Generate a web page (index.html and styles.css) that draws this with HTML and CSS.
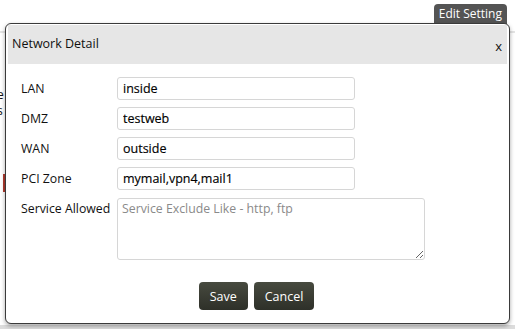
FILE: index.html
```html
<!DOCTYPE html>
<html lang="en">
<head>
  <meta charset="UTF-8" />
  <title>Network Detail</title>
  <link rel="stylesheet" href="styles.css">
</head>
<body>
  <div class="page">
    <div class="top-bar">
      <span class="edit-tab">Edit Setting</span>
    </div>
    <div class="behind">
      <span class="behind-text">e</span>
      <span class="behind-text">s</span>
      <span class="behind-mark"></span>
    </div>
  </div>

  <div class="modal">
    <div class="modal-header">
      <span class="modal-title">Network Detail</span>
      <span class="modal-close">x</span>
    </div>
    <div class="modal-body">
      <div class="form-row">
        <label class="form-label">LAN</label>
        <input class="form-input" type="text" value="inside">
      </div>
      <div class="form-row">
        <label class="form-label">DMZ</label>
        <input class="form-input" type="text" value="testweb">
      </div>
      <div class="form-row">
        <label class="form-label">WAN</label>
        <input class="form-input" type="text" value="outside">
      </div>
      <div class="form-row">
        <label class="form-label">PCI Zone</label>
        <input class="form-input" type="text" value="mymail,vpn4,mail1">
      </div>
      <div class="form-row">
        <label class="form-label">Service Allowed</label>
        <textarea class="form-textarea" placeholder="Service Exclude Like - http, ftp"></textarea>
      </div>
      <div class="form-actions">
        <button class="btn">Save</button>
        <button class="btn">Cancel</button>
      </div>
    </div>
  </div>
</body>
</html>
```

FILE: styles.css
```css
body, html {
  margin: 0;
  padding: 0;
  height: 100%;
  background-color: #fff;
  font-family: 'Open Sans', 'DejaVu Sans', sans-serif;
  font-size: 12px;
  color: #111;
  overflow: hidden;
}

.page {
  height: 100%;
  background: linear-gradient(#fff 0, #fff 325px, #dcdcdc 325px);
}

.top-bar {
  height: 33px;
  border-bottom: 2px solid #e4e4e4;
  display: flex;
  justify-content: flex-end;
  align-items: flex-start;
  padding-right: 8px;
  box-sizing: border-box;
}

.edit-tab {
  margin-top: 4px;
  background-color: #545454;
  color: #fff;
  padding: 1px 5px 0;
  height: 19px;
  line-height: 18px;
  border-radius: 4px 4px 0 0;
}

.behind {
  display: flex;
  flex-direction: column;
  padding-top: 54px;
  margin-left: -3px;
  line-height: 16px;
}

.behind-mark {
  width: 2px;
  height: 18px;
  margin: 55px 0 0 6px;
  background-color: #b03a2e;
}

.modal {
  position: absolute;
  top: 23px;
  left: 5px;
  width: 505px;
  height: 301px;
  box-sizing: border-box;
  background-color: #fff;
  border: 1px solid #3a3a3a;
  border-radius: 6px;
  padding: 1px 2px;
  box-shadow: 0 2px 4px rgba(0, 0, 0, 0.35);
}

.modal-header {
  height: 39px;
  background-color: #e6e6e6;
  display: flex;
  justify-content: space-between;
  align-items: center;
  padding: 0 5px 0 4px;
}

.modal-title {
  font-size: 12.5px;
  margin-top: -2px;
}

.modal-close {
  font-size: 13px;
  margin-top: 3px;
  color: #111;
}

.modal-body {
  padding: 13px 0 0 13px;
}

.form-row {
  display: flex;
  align-items: flex-start;
  margin-bottom: 7px;
}

.form-label {
  width: 96px;
  line-height: 23px;
  font-size: 12.3px;
}

.form-input {
  width: 238px;
  height: 23px;
  box-sizing: border-box;
  border: 1px solid #d6d6d6;
  border-radius: 3px;
  padding: 0 5px;
  font-family: inherit;
  font-size: 12.5px;
  color: #000;
  -webkit-text-stroke: 0.15px #000;
}

.form-textarea {
  width: 308px;
  height: 62px;
  box-sizing: border-box;
  border: 1px solid #d6d6d6;
  border-radius: 3px;
  padding: 1px 4px;
  font-family: inherit;
  font-size: 12.3px;
  margin-top: 1px;
}

.form-textarea::placeholder {
  color: #8a8a8a;
}

.form-actions {
  display: flex;
  justify-content: center;
  gap: 6px;
  margin-top: 22px;
  padding-right: 15px;
}

.btn {
  background: linear-gradient(#474a3f, #2e3029);
  color: #fff;
  border: none;
  border-radius: 4px;
  height: 28px;
  padding: 0 11px;
  font-family: inherit;
  font-size: 12.5px;
  cursor: pointer;
}
```
